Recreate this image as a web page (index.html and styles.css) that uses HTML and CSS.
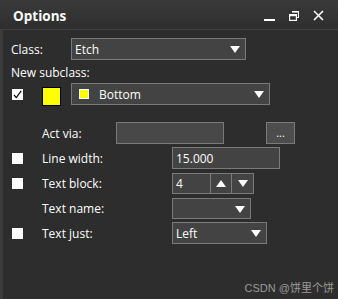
FILE: index.html
```html
<!DOCTYPE html>
<html>
<head>
<meta charset="utf-8">
<link rel="stylesheet" href="styles.css">
</head>
<body>
<div class="win">
  <div class="titlebar">
    <span class="title">Options</span>
    <div class="ctrls">
      <svg class="ic-min" width="11" height="10" viewBox="0 0 11 10"><rect x="0" y="7" width="11" height="2" fill="#fff"/></svg>
      <svg class="ic-restore" width="10" height="10" viewBox="0 0 10 10"><path d="M3 0.5H9.5V6.5H7.5" fill="none" stroke="#fff" stroke-width="1.2"/><rect x="0.6" y="3.6" width="6.8" height="5.8" fill="none" stroke="#fff" stroke-width="1.2"/><rect x="0.6" y="3.6" width="6.8" height="1.6" fill="#fff"/><rect x="3" y="0" width="6.8" height="1.6" fill="#fff"/></svg>
      <svg class="ic-close" width="11" height="11" viewBox="0 0 11 11"><path d="M1 1L10 10M10 1L1 10" stroke="#fff" stroke-width="1.6"/></svg>
    </div>
  </div>
  <div class="body">
    <div class="row r-class">
      <span class="lbl lbl-class">Class:</span>
      <div class="select s-class"><span class="val">Etch</span><i class="arrow"></i></div>
    </div>
    <div class="row r-sub"><span class="lbl">New subclass:</span></div>
    <div class="row r-color">
      <span class="cb checked"><svg width="11" height="11" viewBox="0 0 11 11"><path d="M2 6L4.3 8.6L9.2 1.8" fill="none" stroke="#000" stroke-width="1.2"/></svg></span>
      <span class="swatch"></span>
      <div class="select s-sub"><span class="mini"></span><span class="val val-sub">Bottom</span><i class="arrow"></i></div>
    </div>

    <div class="row r-act">
      <span class="cbspace"></span>
      <span class="lbl lbl-act">Act via:</span>
      <div class="input i-act"></div>
      <div class="btn-dots">...</div>
    </div>
    <div class="row r-list">
      <span class="cb"></span>
      <span class="lbl lbl-wide">Line width:</span>
      <div class="input i-lw"><span class="val">15.000</span></div>
    </div>
    <div class="row r-list">
      <span class="cb"></span>
      <span class="lbl lbl-wide">Text block:</span>
      <div class="spin">
        <div class="spin-val"><span class="val">4</span></div>
        <div class="spin-btn"><i class="arrow up"></i></div>
        <div class="spin-btn"><i class="arrow"></i></div>
      </div>
    </div>
    <div class="row r-list">
      <span class="cbspace"></span>
      <span class="lbl lbl-wide">Text name:</span>
      <div class="select s-name"><i class="arrow"></i></div>
    </div>
    <div class="row r-list">
      <span class="cb"></span>
      <span class="lbl lbl-wide">Text just:</span>
      <div class="select s-just"><span class="val">Left</span><i class="arrow"></i></div>
    </div>
  </div>
  <div class="watermark">CSDN @饼里个饼</div>
</div>
</body>
</html>
```
FILE: styles.css
```css
html, body {
  margin: 0;
  padding: 0;
  background: #2d2d2d;
}
.win {
  width: 338px;
  height: 299px;
  background: #2d2d2d;
  font-family: "Open Sans", "Noto Sans", "Noto Sans CJK SC", sans-serif;
  font-size: 12px;
  color: #fff;
  display: flex;
  flex-direction: column;
  overflow: hidden;
  position: relative;
}
.titlebar {
  height: 29px;
  flex: none;
  background: linear-gradient(#3a3a3a, #2e2e2e);
  border-bottom: 1px solid #3e3e3e;
  display: flex;
  align-items: center;
  padding-left: 13px;
  padding-right: 14px;
}
.title {
  font-weight: 700;
  font-size: 13.5px;
  flex: 1;
  padding-top: 3px;
}
.ctrls {
  display: flex;
  align-items: center;
  gap: 14px;
  padding-top: 2px;
}
.ic-min { margin-top: 2px; }
.body {
  flex: 1;
  border-left: 3px solid #3b3b3b;
  padding-left: 8px;
  padding-top: 8px;
  display: flex;
  flex-direction: column;
}
.row {
  display: flex;
  align-items: center;
  height: 22px;
}
.lbl {
  white-space: nowrap;
  line-height: 16px;
  padding-top: 2px;
}
.lbl-class { width: 60px; }
.r-sub { height: 23px; }
.r-color { margin-bottom: 17px; }
.r-list { margin-top: 3px; }
.cb {
  width: 11px;
  height: 11px;
  background: #fff;
  margin-left: 1px;
  margin-right: 19px;
  flex: none;
  display: block;
}
.cb svg { display: block; }
.cbspace {
  width: 31px;
  flex: none;
}
.swatch {
  width: 17px;
  height: 17px;
  background: #ffff00;
  border: 1px solid #000;
  margin-right: 10px;
  flex: none;
  align-self: flex-end;
  margin-bottom: -1px;
}
.select, .input, .spin {
  box-sizing: border-box;
  height: 22px;
  border: 1px solid #7a7a7a;
  background: #434343;
  display: flex;
  align-items: center;
  position: relative;
  flex: none;
}
.select .val, .input .val, .spin .val {
  padding-left: 3px;
  line-height: 16px;
  padding-top: 2px;
}
.s-class { width: 175px; }
.s-sub { width: 199px; }
.mini {
  width: 8px;
  height: 8px;
  background: #ffff00;
  border: 1px solid #fff;
  margin-left: 7px;
  flex: none;
}
.val-sub { padding-left: 10px !important; }
.arrow {
  position: absolute;
  right: 5px;
  top: 7px;
  width: 0;
  height: 0;
  border-left: 5.5px solid transparent;
  border-right: 5.5px solid transparent;
  border-top: 7px solid #fff;
}
.arrow.up {
  border-top: none;
  border-bottom: 7px solid #fff;
}
.lbl-act { width: 74px; }
.i-act {
  width: 108px;
  background: #484848;
}
.btn-dots {
  box-sizing: border-box;
  width: 29px;
  height: 22px;
  margin-left: 42px;
  border: 1px solid #7a7a7a;
  background: #4d4d4d;
  font-size: 11px;
  text-align: center;
  line-height: 20px;
  flex: none;
}
.lbl-wide { width: 130px; }
.i-lw { width: 108px; }
.spin {
  width: 82px;
  height: 21px;
}
.spin-val {
  width: 37px;
  height: 100%;
  display: flex;
  align-items: center;
  border-right: 1px solid #7a7a7a;
}
.spin-btn {
  width: 21px;
  height: 100%;
  position: relative;
  border-right: 1px solid #7a7a7a;
}
.spin-btn:last-child { border-right: none; }
.spin-btn .arrow { right: 5px; top: 6px; }
.s-name { width: 79px; height: 21px; }
.s-just { width: 95px; }
.watermark {
  position: absolute;
  right: 4px;
  top: 279px;
  font-family: "Liberation Sans", "Noto Sans CJK SC", sans-serif;
  font-size: 11px;
  color: #9a9a9a;
  white-space: nowrap;
}
```
